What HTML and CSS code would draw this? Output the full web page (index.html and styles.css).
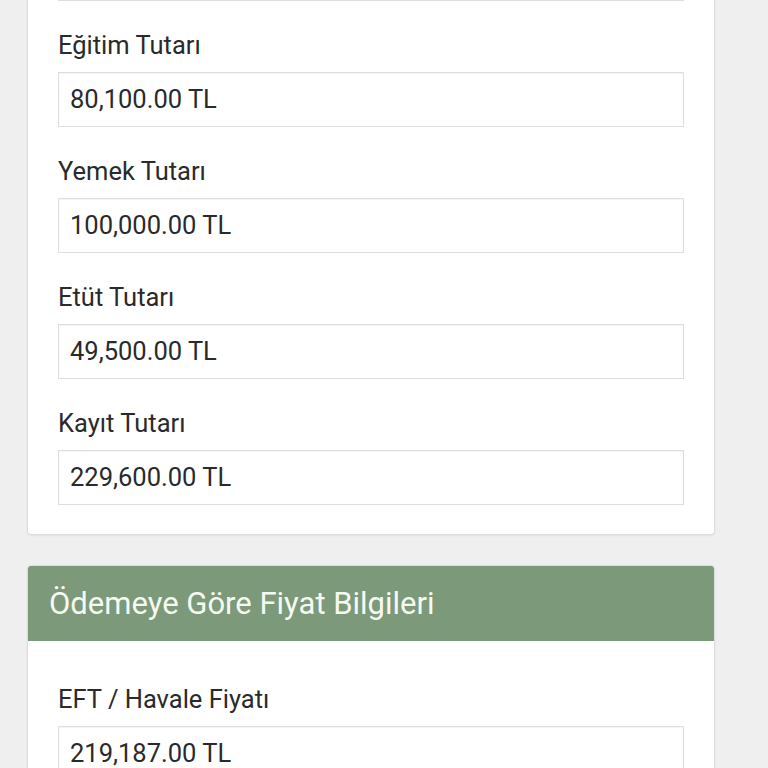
FILE: index.html
```html
<!DOCTYPE html>
<html lang="tr">
<head>
<meta charset="utf-8">
<link rel="stylesheet" href="styles.css">
</head>
<body>
<div class="page">
  <div class="card card-first">
    <div class="card-body">
      <div class="input-tail"></div>
      <div class="field">
        <div class="label">Eğitim Tutarı</div>
        <div class="input">80,100.00 TL</div>
      </div>
      <div class="field">
        <div class="label">Yemek Tutarı</div>
        <div class="input">100,000.00 TL</div>
      </div>
      <div class="field">
        <div class="label">Etüt Tutarı</div>
        <div class="input">49,500.00 TL</div>
      </div>
      <div class="field">
        <div class="label">Kayıt Tutarı</div>
        <div class="input">229,600.00 TL</div>
      </div>
    </div>
  </div>
  <div class="card">
    <div class="card-header">Ödemeye Göre Fiyat Bilgileri</div>
    <div class="card-body card-body-header">
      <div class="field">
        <div class="label">EFT / Havale Fiyatı</div>
        <div class="input">219,187.00 TL</div>
      </div>
    </div>
  </div>
</div>
</body>
</html>
```

FILE: styles.css
```css
html, body {
  margin: 0;
  padding: 0;
  background: #efefef;
  font-family: Roboto, "Noto Sans", sans-serif;
  color: #2a2a2a;
  overflow: hidden;
}
.page {
  width: 688px;
  margin-left: 27px;
  display: flex;
  flex-direction: column;
  gap: 30px;
}
.card {
  background: #fff;
  border: 1px solid #dcdcdc;
  border-radius: 4px;
  box-shadow: 0 1px 2px rgba(0,0,0,0.06);
  overflow: hidden;
}
.card-first {
  margin-top: -40px;
}
.card-body {
  padding: 30px 30px 29px 30px;
  display: flex;
  flex-direction: column;
  gap: 30px;
}
.card-body-header {
  padding-top: 44px;
}
.input-tail {
  height: 10px;
  box-sizing: border-box;
  border: 1px solid #dedede;
  border-top: none;
}
.label {
  font-size: 25.5px;
  line-height: 28px;
  margin-bottom: 13px;
  color: #2a2a2a;
}
.input {
  font-size: 25.5px;
  line-height: 28px;
  padding: 12px 12px 13px 11px;
  border: 1px solid #dedede;
  box-shadow: inset 0 1px 1px rgba(0,0,0,0.05);
  color: #2a2a2a;
}
.card-header {
  background: #7c9a7a;
  color: #f6f9f2;
  font-size: 31px;
  line-height: 75px;
  height: 75px;
  padding: 0 21px;
}
```
